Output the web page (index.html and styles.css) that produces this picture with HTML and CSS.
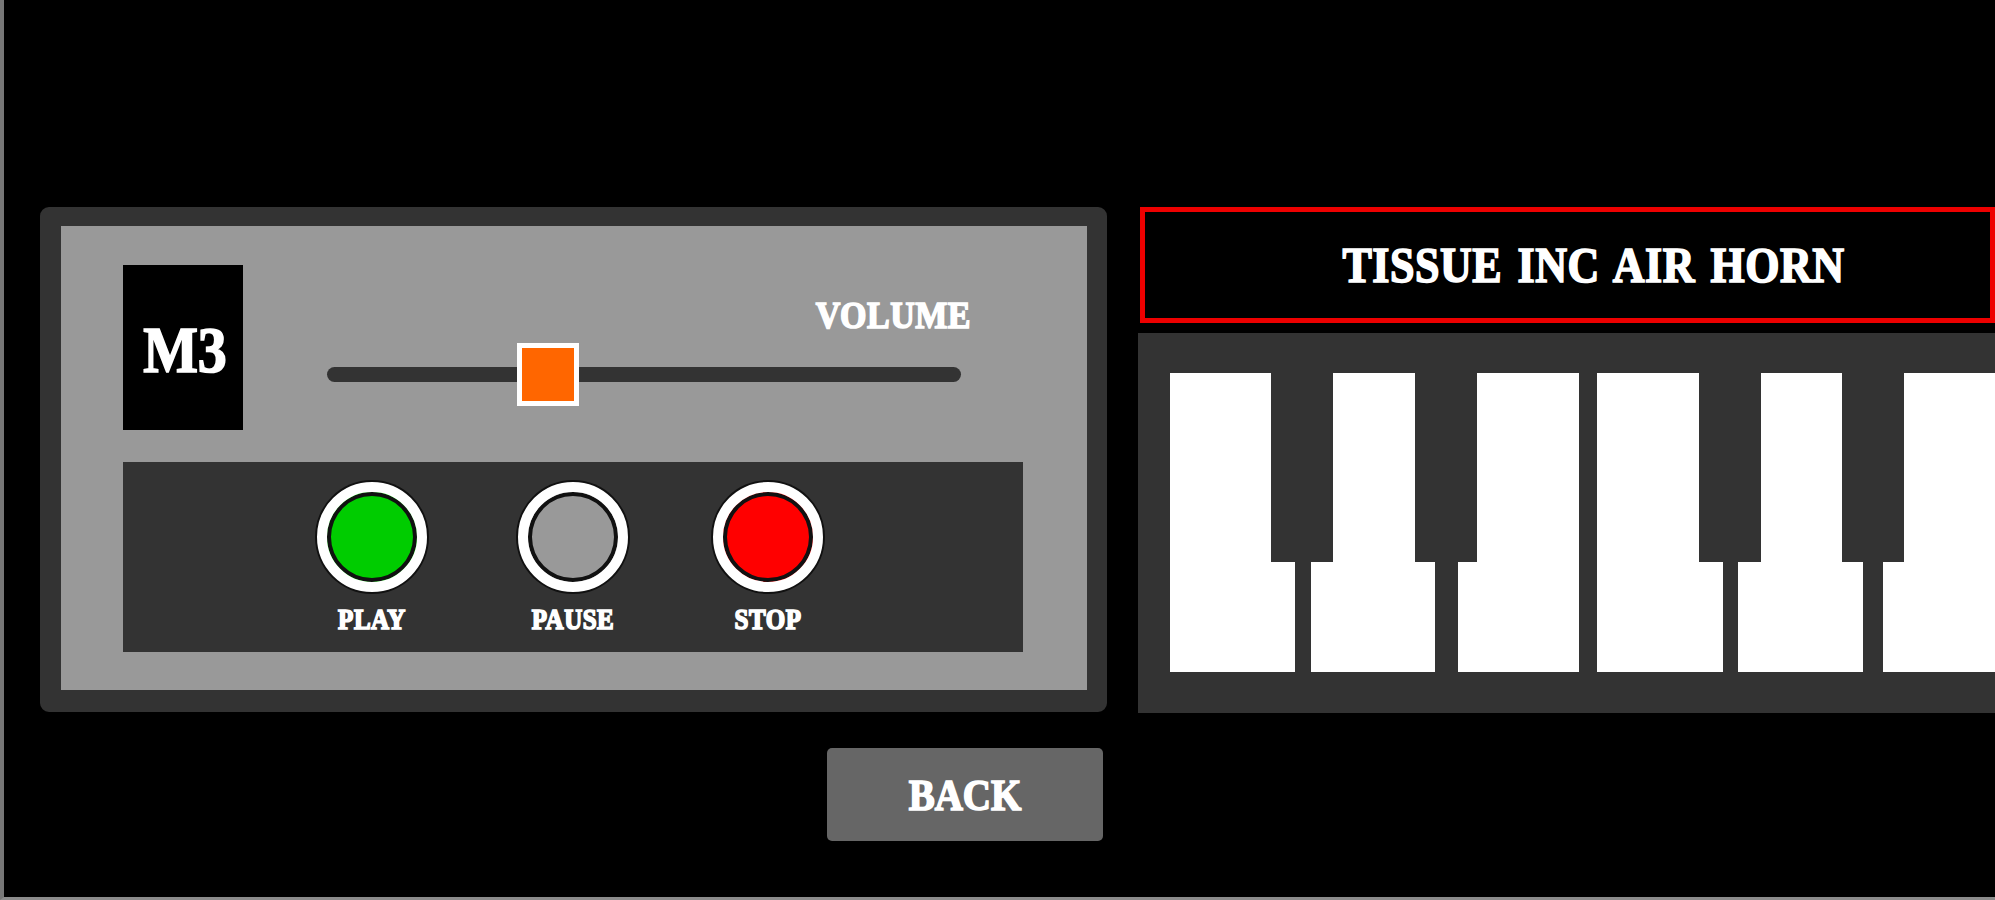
FILE: index.html
```html
<!DOCTYPE html>
<html lang="en">

<head>
    <meta charset="UTF-8">
    <meta name="viewport" content="width=device-width, initial-scale=1.0">
    <title>Soundboard</title>
    <link rel="stylesheet" href="styles.css">
</head>

<body>
    <div id="stage">
        <div class="left">
            <div class="player">
                <div class="top-row">
                    <div class="track-no"><span class="tall">M3</span></div>
                    <div class="volume">
                        <span class="tall volume-label">VOLUME</span>
                        <div class="slider">
                            <div class="thumb"></div>
                        </div>
                    </div>
                </div>
                <div class="controls">
                    <div class="ctrl ctrl-play">
                        <div class="lamp green"></div>
                        <span class="tall">PLAY</span>
                    </div>
                    <div class="ctrl ctrl-pause">
                        <div class="lamp grey"></div>
                        <span class="tall">PAUSE</span>
                    </div>
                    <div class="ctrl ctrl-stop">
                        <div class="lamp red"></div>
                        <span class="tall">STOP</span>
                    </div>
                </div>
            </div>
            <div class="back"><span class="tall">BACK</span></div>
        </div>
        <div class="right">
            <div class="title"><span class="tall">TISSUE INC AIR HORN</span></div>
            <div class="keyboard">
                <div class="whites">
                    <div class="white w1"></div>
                    <div class="white w2"></div>
                    <div class="white w3"></div>
                    <div class="white w4"></div>
                    <div class="white w5"></div>
                    <div class="white w6"></div>
                </div>
                <div class="black b1"></div>
                <div class="black b2"></div>
                <div class="black b3"></div>
                <div class="black b4"></div>
            </div>
        </div>
    </div>
</body>

</html>
```

FILE: styles.css
```css
* {
    box-sizing: border-box;
}

html,
body {
    margin: 0;
    height: 100%;
    overflow: hidden;
    background: #000;
}

#stage {
    width: 1995px;
    height: 900px;
    display: flex;
    align-items: flex-start;
    gap: 31px;
    padding: 207px 0 0 36px;
    border-left: 4px solid #777;
    border-bottom: 3px solid #8c8c8c;
    color: #fff;
    font-family: "Liberation Serif", "DejaVu Serif", serif;
    font-weight: bold;
}

/* no stencil font here, so stretch a heavy serif */
.tall {
    display: inline-block;
    transform: scaleY(1.14);
    -webkit-text-stroke: 1.5px #fff;
}

.left {
    width: 1067px;
    display: flex;
    flex-direction: column;
    align-items: flex-end;
    gap: 36px;
}

.player {
    width: 100%;
    height: 505px;
    background: #999;
    border: solid #333;
    border-width: 19px 20px 22px 21px;
    border-radius: 9px;
    padding: 39px 64px 38px 62px;
    display: flex;
    flex-direction: column;
    gap: 32px;
}

.top-row {
    display: flex;
    height: 165px;
}

.track-no {
    width: 120px;
    height: 165px;
    padding: 4px 0 0 4px;
    background: #000;
    font-size: 58px;
    display: flex;
    align-items: center;
    justify-content: center;
}

.volume {
    flex: 1;
    display: flex;
    flex-direction: column;
    padding: 33px 0 0 84px;
}

.volume-label {
    align-self: flex-end;
    font-size: 34px;
    letter-spacing: 0.5px;
    line-height: 33px;
    margin-right: 52px;
}

.slider {
    position: relative;
    width: 634px;
    height: 15px;
    margin-top: 36px;
    background: #333;
    border-radius: 8px;
}

.thumb {
    position: absolute;
    left: 190px;
    top: -24px;
    width: 62px;
    height: 63px;
    background: #f60;
    border: 5px solid #fff;
}

.controls {
    position: relative;
    height: 190px;
    background: #333;
}

.ctrl {
    position: absolute;
    top: 20px;
    width: 110px;
    display: flex;
    flex-direction: column;
    align-items: center;
    gap: 15px;
    font-size: 25px;
    letter-spacing: 0.5px;
    line-height: 26px;
    white-space: nowrap;
}

.ctrl-play {
    left: 194px;
}

.ctrl-pause {
    left: 395px;
}

.ctrl-stop {
    left: 590px;
}

.lamp {
    flex: none;
    width: 110px;
    height: 110px;
    border-radius: 50%;
    border: 10px solid #fff;
    box-shadow: inset 0 0 0 4px #111, 0 0 0 2px #111;
}

.green {
    background: #0c0;
}

.grey {
    background: #999;
}

.red {
    background: #f00;
}

.back {
    width: 276px;
    height: 93px;
    margin-right: 4px;
    background: #666;
    border-radius: 5px;
    font-size: 39px;
    display: flex;
    align-items: center;
    justify-content: center;
}

.right {
    flex: 1;
    display: flex;
    flex-direction: column;
    gap: 10px;
}

.title {
    height: 116px;
    margin-left: 2px;
    border: 5px solid #ee0000;
    padding-left: 52px;
    font-size: 44px;
    letter-spacing: 0.5px;
    word-spacing: 4px;
    display: flex;
    align-items: center;
    justify-content: center;
}

.keyboard {
    position: relative;
    height: 380px;
    padding: 40px 0 41px 32px;
    background: #333;
    overflow: hidden;
}

.whites {
    display: flex;
    height: 100%;
}

.white {
    background: #fff;
}

.w1 {
    width: 125px;
    margin-right: 16px;
}

.w2 {
    width: 124px;
    margin-right: 23px;
}

.w3 {
    width: 121px;
    margin-right: 18px;
}

.w4 {
    width: 126px;
    margin-right: 15px;
}

.w5 {
    width: 125px;
    margin-right: 20px;
}

.w6 {
    width: 112px;
}

.black {
    position: absolute;
    top: 0;
    width: 62px;
    height: 229px;
    background: #333;
}

.b1 {
    left: 133px;
}

.b2 {
    left: 277px;
}

.b3 {
    left: 561px;
}

.b4 {
    left: 704px;
}
```
